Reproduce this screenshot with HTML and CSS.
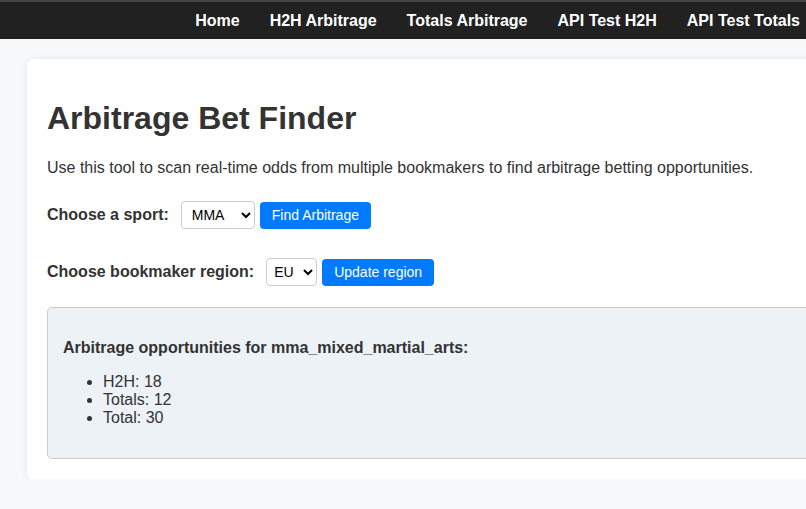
FILE: index.html
```html
<!DOCTYPE html>
<html lang="en">
<head>
<meta charset="utf-8">
<title>Arbitrage Bet Finder</title>
<link rel="stylesheet" href="styles.css">
</head>
<body>
<nav class="navbar">
  <a href="#">Home</a>
  <a href="#">H2H Arbitrage</a>
  <a href="#">Totals Arbitrage</a>
  <a href="#">API Test H2H</a>
  <a href="#">API Test Totals</a>
</nav>
<main class="container">
  <h1>Arbitrage Bet Finder</h1>
  <p class="intro">Use this tool to scan real-time odds from multiple bookmakers to find arbitrage betting opportunities.</p>
  <form class="row">
    <label>Choose a sport:</label>
    <select class="sel sel-sport"><option>MMA</option></select>
    <button type="button" class="btn">Find Arbitrage</button>
  </form>
  <form class="row row-region">
    <label>Choose bookmaker region:</label>
    <select class="sel sel-region"><option>EU</option></select>
    <button type="button" class="btn">Update region</button>
  </form>
  <section class="results">
    <h3>Arbitrage opportunities for mma_mixed_martial_arts:</h3>
    <ul>
      <li>H2H: 18</li>
      <li>Totals: 12</li>
      <li>Total: 30</li>
    </ul>
  </section>
</main>
</body>
</html>
```
FILE: styles.css
```css
html, body {
  margin: 0;
  padding: 0;
  overflow: hidden;
}
body {
  background: #f7f8fa;
  font-family: "Liberation Sans", Arial, sans-serif;
  color: #333;
}
.navbar {
  display: flex;
  justify-content: flex-end;
  height: 37px;
  align-items: center;
  background: #212121;
  border-top: 2px solid #444;
  padding-right: 6px;
}
.navbar a {
  color: #fff;
  font-weight: bold;
  font-size: 16px;
  text-decoration: none;
  margin-left: 30px;
}
.container {
  background: #fff;
  margin: 20px 0 0 27px;
  width: 900px;
  padding: 20px;
  border-radius: 6px;
  box-shadow: 0 0 6px rgba(0,0,0,0.08);
}
h1 {
  font-size: 32px;
  margin: 21px 0 22px;
  color: #333;
}
.intro {
  font-size: 16px;
  margin: 0 0 24px;
}
.row {
  display: flex;
  align-items: center;
  margin-bottom: 29px;
}
.row label {
  font-weight: bold;
  font-size: 16px;
  margin-right: 12px;
}
.row-region {
  margin-bottom: 21px;
}
.sel {
  height: 28px;
  font-family: "Liberation Sans", Arial, sans-serif;
  font-size: 14px;
  border: 1px solid #ccc;
  border-radius: 4px;
  background: #fff;
  color: #000;
  padding: 0 2px 0 6px;
  margin-right: 5px;
}
.sel-sport { width: 74px; }
.sel-region { width: 51px; padding: 0 0 0 3px; }
.btn {
  background: #007bff;
  color: #fff;
  border: none;
  border-radius: 4px;
  height: 27px;
  padding: 0 12px;
  font-family: "Liberation Sans", Arial, sans-serif;
  font-size: 14px;
}
.results {
  background: #edf2f7;
  border: 1px solid #ccc;
  border-radius: 5px;
  padding: 13px 15px 15px;
}
.results h3 {
  font-size: 16px;
  margin: 18px 0 16px;
}
.results ul {
  margin: 0 0 16px;
  padding-left: 40px;
  font-size: 16px;
  line-height: 18px;
}
```
